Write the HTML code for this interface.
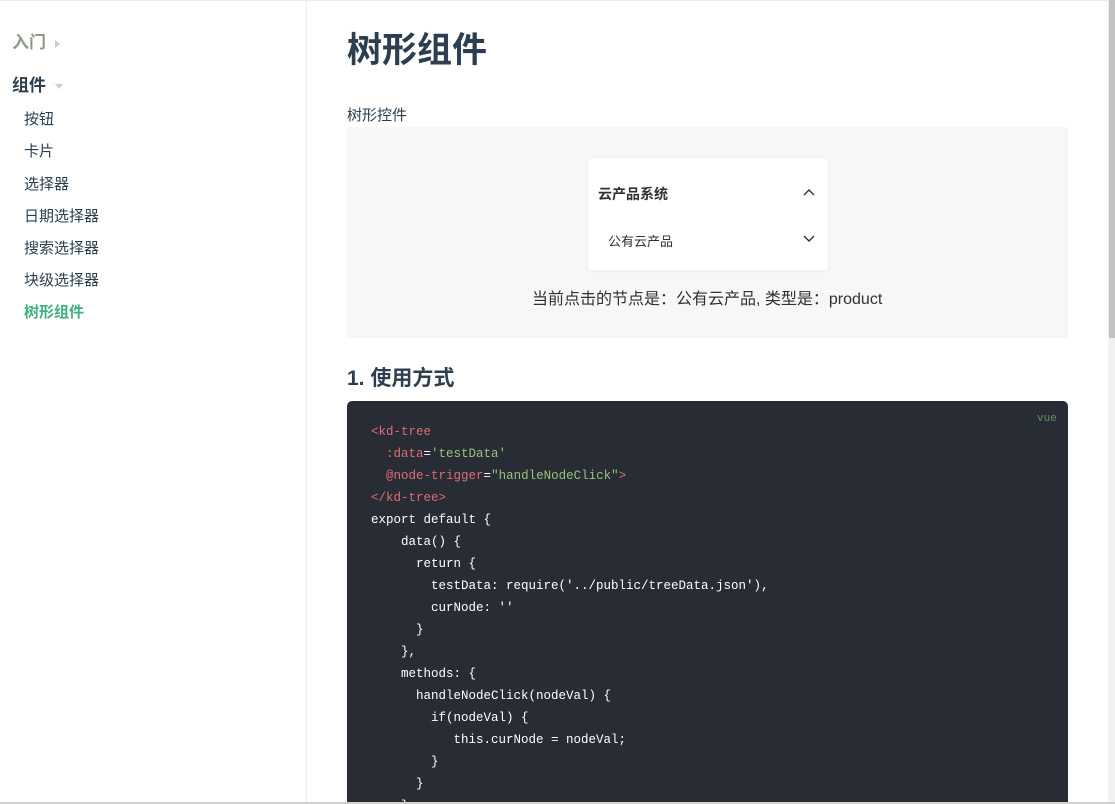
<!DOCTYPE html>
<html style="overflow:hidden"><head><meta charset="utf-8"><style>
*{margin:0;padding:0;box-sizing:border-box}
html,body{width:1115px;height:804px;overflow:hidden}
body{background:#fff;font-family:"Liberation Sans","Noto Sans CJK SC",sans-serif;color:#2c3e50;position:relative}
.top{position:absolute;left:0;top:0;width:1108px;height:1px;background:#eaecef}
.side{position:absolute;left:0;top:1px;width:307px;height:801px;border-right:1px solid #eaecef}
.g{position:absolute;left:12px;font-size:17px;font-weight:bold}
.it{position:absolute;left:24px;font-size:15px;color:#2c3e50}
.tri{display:inline-block;width:0;height:0;margin-left:9px;vertical-align:middle}
h1{position:absolute;left:347px;top:22px;font-size:35px;font-weight:bold;white-space:nowrap}
.demo{position:absolute;left:347px;top:127px;width:721px;height:211px;background:#f7f7f7}
.card{position:absolute;left:588px;top:158px;width:240px;height:112px;background:#fff;border-radius:3px;box-shadow:0 0 3px rgba(0,0,0,.06)}
.code{position:absolute;left:347px;top:401px;width:721px;height:401px;background:#282c34;border-radius:5px 5px 0 0;overflow:hidden}
pre{position:absolute;left:24px;top:20px;font-family:"Liberation Mono",monospace;font-size:12.5px;line-height:22px;color:#fff}
.r{color:#e06c75}.s{color:#98c379}
.sb{position:absolute;left:1108px;top:0;width:7px;height:804px;background:#f1f1f1}
.th{position:absolute;left:1109px;top:0;width:6px;height:338px;background:#c1c1c1}
.bot{position:absolute;left:0;top:802px;width:1115px;height:2px;background:#d0d0d0}
</style></head><body>
<div class="top"></div>
<div class="side">
<div class="g" style="top:27px;color:#8e9a8c">入门<span class="tri" style="border-left:5px solid #ccc;border-top:4px solid transparent;border-bottom:4px solid transparent"></span></div>
<div class="g" style="top:70px">组件<span class="tri" style="border-top:5px solid #ccc;border-left:4px solid transparent;border-right:4px solid transparent"></span></div>
<div class="it" style="top:107px">按钮</div>
<div class="it" style="top:139px">卡片</div>
<div class="it" style="top:172px">选择器</div>
<div class="it" style="top:204px">日期选择器</div>
<div class="it" style="top:236px">搜索选择器</div>
<div class="it" style="top:268px">块级选择器</div>
<div class="it" style="top:300px;color:#3eaf7c;font-weight:bold">树形组件</div>
</div>
<h1>树形组件</h1>
<div style="position:absolute;left:347px;top:104px;font-size:15px">树形控件</div>
<div class="demo"></div>
<div class="card">
<div style="position:absolute;left:10px;top:26px;font-size:14px;font-weight:bold;color:#303133">云产品系统</div>
<svg style="position:absolute;left:214px;top:30px" width="16" height="10"><path d="M2 7 L7 2 L12 7" stroke="#303133" stroke-width="1.4" fill="none"/></svg>
<div style="position:absolute;left:20px;top:73px;font-size:13px;color:#303133">公有云产品</div>
<svg style="position:absolute;left:214px;top:76px" width="16" height="10"><path d="M2 2 L7 7 L12 2" stroke="#303133" stroke-width="1.4" fill="none"/></svg>
</div>
<div style="position:absolute;left:532px;top:285px;font-size:16px;color:#303133;white-space:nowrap">当前点击的节点是：公有云产品, 类型是：product</div>
<div style="position:absolute;left:347px;top:362px;font-size:21px;font-weight:bold">1. 使用方式</div>
<div class="code">
<div style="position:absolute;left:690px;top:12px;font-family:'Liberation Mono',monospace;font-size:11px;color:#6a8f5a">vue</div>
<pre><span class="r">&lt;kd-tree</span>
  <span class="r">:data</span>=<span class="s">'testData'</span>
  <span class="r">@node-trigger</span>=<span class="s">"handleNodeClick"</span><span class="r">&gt;</span>
<span class="r">&lt;/kd-tree&gt;</span>
export default {
    data() {
      return {
        testData: require('../public/treeData.json'),
        curNode: ''
      }
    },
    methods: {
      handleNodeClick(nodeVal) {
        if(nodeVal) {
           this.curNode = nodeVal;
        }
      }
    }</pre>
</div>
<div class="sb"></div><div class="th"></div>
<div class="bot"></div>
</body></html>
